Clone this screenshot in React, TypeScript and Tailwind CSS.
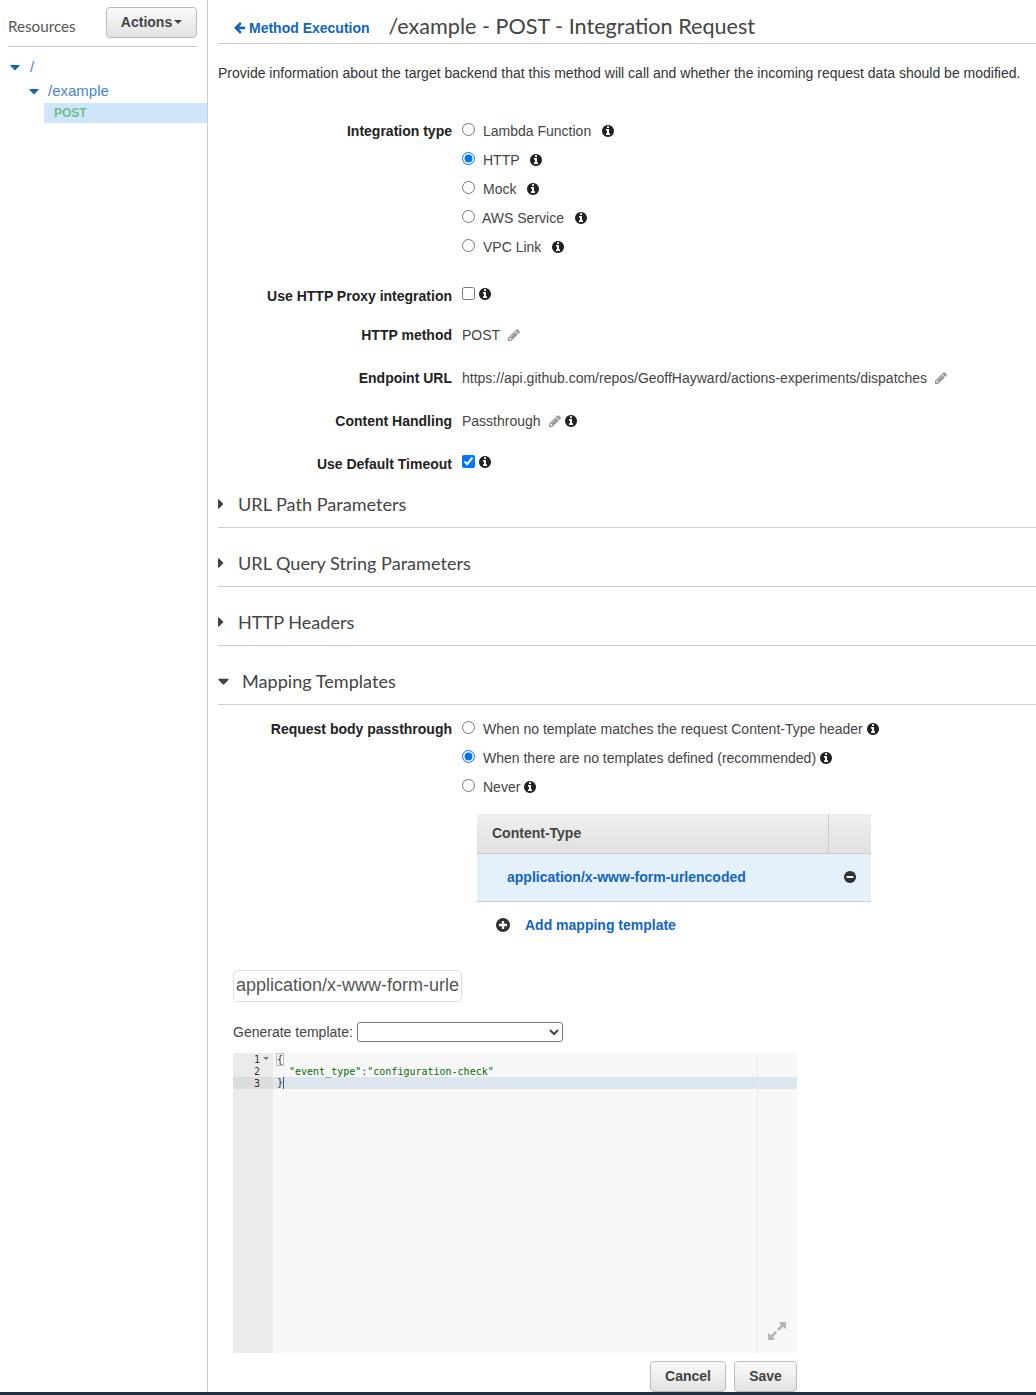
import { FaCaretDown, FaCaretRight } from 'react-icons/fa';

const INFO_PATH = 'M1152 1376v-160q0-14-9-23t-23-9h-96v-512q0-14-9-23t-23-9h-320q-14 0-23 9t-9 23v160q0 14 9 23t23 9h96v320h-96q-14 0-23 9t-9 23v160q0 14 9 23t23 9h448q14 0 23-9t9-23zm-128-896v-160q0-14-9-23t-23-9h-192q-14 0-23 9t-9 23v160q0 14 9 23t23 9h192q14 0 23-9t9-23zm640 416q0 209-103 385.5t-279.5 279.5-385.5 103-385.5-103-279.5-279.5-103-385.5 103-385.5 279.5-279.5 385.5-103 385.5 103 279.5 279.5 103 385.5z';
const PENCIL_PATH = 'M491 1536l91-91-235-235-91 91v107h128v128h107zm523-928q0-22-22-22-10 0-17 7l-542 542q-7 7-7 17 0 22 22 22 10 0 17-7l542-542q7-7 7-17zm-54-192l416 416-832 832h-416v-416zm683 96q0 53-37 90l-166 166-416-416 166-165q36-38 90-38 53 0 91 38l235 234q37 39 37 91z';
const ARROW_PATH = 'M1664 896v128q0 53-32.5 90.5t-84.5 37.5h-704l293 294q38 36 38 90t-38 90l-75 76q-37 37-90 37-52 0-91-37l-651-652q-37-37-37-90 0-52 37-91l651-650q38-38 91-38 52 0 90 38l75 74q38 38 38 91t-38 91l-293 293h704q52 0 84.5 37.5t32.5 90.5z';
const PLUS_PATH = 'M1344 960v-128q0-26-19-45t-45-19h-256v-256q0-26-19-45t-45-19h-128q-26 0-45 19t-19 45v256h-256q-26 0-45 19t-19 45v128q0 26 19 45t45 19h256v256q0 26 19 45t45 19h128q26 0 45-19t19-45v-256h256q26 0 45-19t19-45zm320-64q0 209-103 385.5t-279.5 279.5-385.5 103-385.5-103-279.5-279.5-103-385.5 103-385.5 279.5-279.5 385.5-103 385.5 103 279.5 279.5 103 385.5z';
const MINUS_PATH = 'M1344 960v-128q0-26-19-45t-45-19h-768q-26 0-45 19t-19 45v128q0 26 19 45t45 19h768q26 0 45-19t19-45zm320-64q0 209-103 385.5t-279.5 279.5-385.5 103-385.5-103-279.5-279.5-103-385.5 103-385.5 279.5-279.5 385.5-103 385.5 103 279.5 279.5 103 385.5z';
const EXPAND_PATH = 'M883 1056q0 13-10 23l-332 332 144 144q19 19 19 45t-19 45-45 19h-448q-26 0-45-19t-19-45v-448q0-26 19-45t45-19 45 19l144 144 332-332q10-10 23-10t23 10l114 114q10 10 10 23zm781-864v448q0 26-19 45t-45 19-45-19l-144-144-332 332q-10 10-23 10t-23-10l-114-114q-10-10-10-23t10-23l332-332-144-144q-19-19-19-45t19-45 45-19h448q26 0 45 19t19 45z';

const INTEGRATION_TYPES = [
  { label: 'Lambda Function', textGap: 'ml-[8px]', gap: 'ml-[11px]' },
  { label: 'HTTP', textGap: 'ml-[8px]', gap: 'ml-[10px]', checked: true },
  { label: 'Mock', textGap: 'ml-[8px]', gap: 'ml-[11px]' },
  { label: 'AWS Service', textGap: 'ml-[7px]', gap: 'ml-[11px]' },
  { label: 'VPC Link', textGap: 'ml-[8px]', gap: 'ml-[11px]' },
];

const PASSTHROUGH = [
  { label: 'When no template matches the request Content-Type header' },
  { label: 'When there are no templates defined (recommended)', checked: true },
  { label: 'Never' },
];

const SECTIONS = ['URL Path Parameters', 'URL Query String Parameters', 'HTTP Headers'];

function Glyph({ d, box = '0 0 1792 1792', className = '' }: { d: string; box?: string; className?: string }) {
  return (
    <svg viewBox={box} fill="currentColor" className={`shrink-0 ${className}`}>
      <path d={d} />
    </svg>
  );
}

function Info({ className = '' }: { className?: string }) {
  return <Glyph d={INFO_PATH} box="128 128 1536 1536" className={`w-[12px] h-[12px] text-[#222] ${className}`} />;
}

function Pencil({ className = '' }: { className?: string }) {
  return <Glyph d={PENCIL_PATH} className={`w-[14px] h-[14px] text-[#999] ${className}`} />;
}

function Radio({ checked }: { checked?: boolean }) {
  return <input type="radio" defaultChecked={checked} className="m-0 w-[13px] h-[13px] relative -top-[1px] shrink-0" />;
}

function Row({ label, height, labelClass = '', children }: { label: string; height: string; labelClass?: string; children: React.ReactNode }) {
  return (
    <div className={`flex items-center ${height}`}>
      <div className={`w-[234px] shrink-0 text-right font-bold text-[#222] ${labelClass}`}>{label}</div>
      <div className="ml-[10px] flex items-center">{children}</div>
    </div>
  );
}

function Section({ title, open }: { title: string; open?: boolean }) {
  return (
    <div className="h-[59px] border-b border-[#ccc] flex items-end pb-[11px] text-[18.1px] leading-[24px] text-[#444] font-['Lato',sans-serif]">
      {open ? <FaCaretDown className="text-[18px] text-[#444] mb-[3px] w-[11px] shrink-0 overflow-visible" /> : <FaCaretRight className="text-[18px] text-[#444] mb-[3px] w-[6px] shrink-0 overflow-visible" />}
      <span className={open ? 'ml-[13px]' : 'ml-[14px]'}>{title}</span>
    </div>
  );
}

function GrayButton({ children, className = '' }: { children: React.ReactNode; className?: string }) {
  return (
    <button className={`rounded-[4px] border border-[#bbb] bg-gradient-to-b from-[#fafafa] to-[#e2e2e2] font-bold text-[#444] text-[14px] flex items-center justify-center ${className}`}>
      {children}
    </button>
  );
}

export default function App() {
  return (
    <div className="h-[1395px] w-[1036px] overflow-hidden flex flex-col bg-white text-[14px] leading-[20px] text-[#444] font-['Liberation_Sans',Arial,sans-serif]">
      <div className="flex flex-1 min-h-0">
        {/* Resource tree */}
        <aside className="w-[208px] shrink-0 border-r border-[#ccc]">
          <div className="ml-[8px] mr-[10px] h-[47px] border-b border-[#ccc] flex items-start justify-between">
            <span className="mt-[16px] text-[15.2px] font-['Lato',sans-serif] text-[#555]">Resources</span>
            <GrayButton className="mt-[7px] w-[91px] h-[31px] pb-[2px]">
              Actions
              <span className="ml-[2px] mt-[1px] w-0 h-0 border-x-[4px] border-x-transparent border-t-[4px] border-t-[#444]" />
            </GrayButton>
          </div>
          <div className="mt-[10px] h-[20px] flex items-center pl-[10px] text-[15px] text-[#4a86c8]">
            <FaCaretDown className="text-[16px] text-[#1166bb] w-[10px] overflow-visible" />
            <span className="ml-[10px]">/</span>
          </div>
          <div className="mt-[4px] h-[20px] flex items-center pl-[29px] text-[15px] text-[#4a86c8]">
            <FaCaretDown className="text-[16px] text-[#1166bb] w-[10px] overflow-visible" />
            <span className="ml-[9px]">/example</span>
          </div>
          <div className="mt-[2px] ml-[44px] h-[20px] bg-[#cfe5fb] pl-[10px] flex items-center font-bold text-[12px] text-[#6cc089]">POST</div>
        </aside>

        {/* Integration request form */}
        <main className="flex-1 min-w-0 pl-[10px]">
          <div className="h-[44px] border-b border-[#ccc] flex items-center pl-[15px] pt-[10px] pb-[2px]">
            <Glyph d={ARROW_PATH} className="w-[13px] h-[13px] text-[#1166bb] relative top-[2px]" />
            <span className="ml-[3px] font-bold text-[#1166bb] relative top-[2px]">Method Execution</span>
            <span className="ml-[19px] text-[21.6px] leading-[28px] text-[#444] font-['Lato',sans-serif]">/example - POST - Integration Request</span>
          </div>
          <p className="mt-[19px] h-[20px] whitespace-nowrap text-[#333]">Provide information about the target backend that this method will call and whether the incoming request data should be modified.</p>

          <div className="mt-[33px]">
            {INTEGRATION_TYPES.map((t, i) => (
              <div key={t.label} className="flex items-center h-[29px]">
                <div className="w-[234px] shrink-0 text-right font-bold text-[#222]">{i === 0 ? 'Integration type' : ''}</div>
                <div className="ml-[10px] flex items-center">
                  <Radio checked={t.checked} />
                  <span className={t.textGap}>{t.label}</span>
                  <Info className={t.gap} />
                </div>
              </div>
            ))}
          </div>

          <Row label="Use HTTP Proxy integration" height="h-[34px] mt-[17px]" labelClass="relative top-[1px]">
            <input type="checkbox" className="m-0 w-[13px] h-[13px] relative -top-[2px]" />
            <Info className="ml-[4px] relative -top-[1px]" />
          </Row>
          <Row label="HTTP method" height="h-[20px] mt-[13px]">
            <span>POST</span>
            <Pencil className="ml-[7px]" />
          </Row>
          <Row label="Endpoint URL" height="h-[20px] mt-[23px]">
            <span>https://api.github.com/repos/GeoffHayward/actions-experiments/dispatches</span>
            <Pencil className="ml-[7px]" />
          </Row>
          <Row label="Content Handling" height="h-[20px] mt-[23px]">
            <span>Passthrough</span>
            <Pencil className="ml-[7px]" />
            <Info className="ml-[3px]" />
          </Row>
          <Row label="Use Default Timeout" height="h-[20px] mt-[22px]" labelClass="relative top-[1px]">
            <input type="checkbox" defaultChecked className="m-0 w-[13px] h-[13px] relative -top-[2px]" />
            <Info className="ml-[4px] relative -top-[1px]" />
          </Row>

          <div className="-mt-[4px]">
            {SECTIONS.map((s) => (
              <Section key={s} title={s} />
            ))}
            <Section title="Mapping Templates" open />
          </div>

          <div className="mt-[9px]">
            {PASSTHROUGH.map((p, i) => (
              <div key={p.label} className="flex items-center h-[29px]">
                <div className="w-[234px] shrink-0 text-right font-bold text-[#222]">{i === 0 ? 'Request body passthrough' : ''}</div>
                <div className="ml-[10px] flex items-center">
                  <Radio checked={p.checked} />
                  <span className="ml-[8px]">{p.label}</span>
                  <Info className="ml-[4px]" />
                </div>
              </div>
            ))}
          </div>

          {/* Content types */}
          <div className="ml-[259px] w-[394px] mt-[13px]">
            <div className="h-[40px] flex border-b border-[#ccc] bg-gradient-to-b from-[#f0f0f0] to-[#e0e0e0]">
              <div className="w-[352px] pl-[15px] pb-[2px] border-r border-[#ccc] flex items-center font-bold text-[#444]">Content-Type</div>
            </div>
            <div className="h-[48px] border-b border-[#ccc] bg-[#e4f1fd] flex items-center justify-between pl-[30px] pr-[15px] pb-[2px]">
              <span className="font-bold text-[#1166bb]">application/x-www-form-urlencoded</span>
              <Glyph d={MINUS_PATH} box="128 128 1536 1536" className="w-[12px] h-[12px] text-[#333]" />
            </div>
            <div className="mt-[13px] h-[20px] flex items-center pl-[19px]">
              <Glyph d={PLUS_PATH} box="128 128 1536 1536" className="w-[14px] h-[14px] text-[#333]" />
              <span className="ml-[15px] font-bold text-[#1166bb]">Add mapping template</span>
            </div>
          </div>

          <div className="ml-[15px]">
            <input
              readOnly
              value="application/x-www-form-urlencoded"
              className="mt-[35px] block w-[229px] h-[32px] px-[2px] pb-[2px] rounded-[5px] border border-[#ddd] text-[18px] text-[#555] outline-none"
            />
            <div className="mt-[20px] h-[20px] flex items-center">
              <span>Generate template:</span>
              <select className="ml-[4px] w-[206px] h-[20px] border border-[#777] rounded-[3px] bg-white" />
            </div>

            {/* Template editor */}
            <div className="relative mt-[11px] w-[564px] h-[300px] flex bg-[#f8f8f8] font-['DejaVu_Sans_Mono',monospace] text-[10px] leading-[12px] text-[#333]">
              <div className="w-[40px] shrink-0 bg-[#ebebeb]">
                <div className="h-[12px] pr-[13px] pt-[1px] text-right relative">
                  1
                  <span className="absolute right-[4px] top-[4px] w-0 h-0 border-x-[3px] border-x-transparent border-t-[3px] border-t-[#777]" />
                </div>
                <div className="h-[12px] pr-[13px] pt-[1px] text-right">2</div>
                <div className="h-[12px] pr-[13px] pt-[1px] text-right bg-[#dcdcdc]">3</div>
              </div>
              <div className="flex-1 min-w-0">
                <div className="h-[12px] pl-[4px] pt-[1px]">
                  <span className="border border-[#bbb] leading-[10px] -ml-[1px]">{'{'}</span>
                </div>
                <div className="h-[12px] pl-[16px] pt-[1px] whitespace-pre">
                  <span className="text-[#036a07]">"event_type"</span>:<span className="text-[#036a07]">"configuration-check"</span>
                </div>
                <div className="h-[12px] pl-[4px] bg-[#dde5ee] flex items-center">
                  <span>{'}'}</span>
                  <span className="w-[1px] h-[12px] bg-[#555]" />
                </div>
              </div>
              <div className="absolute top-0 bottom-0 left-[524px] w-[1px] bg-[#e8e8e8]" />
              <Glyph d={EXPAND_PATH} box="128 128 1536 1536" className="absolute right-[11px] bottom-[13px] w-[18px] h-[18px] text-[#b5b5b5]" />
            </div>

            <div className="mt-[8px] w-[564px] flex justify-end gap-[8px]">
              <GrayButton className="w-[76px] h-[31px] pb-[1px]">Cancel</GrayButton>
              <GrayButton className="w-[63px] h-[31px] pb-[1px]">Save</GrayButton>
            </div>
          </div>
        </main>
      </div>
      <div className="h-[3px] shrink-0 bg-[#232f3e]" />
    </div>
  );
}
